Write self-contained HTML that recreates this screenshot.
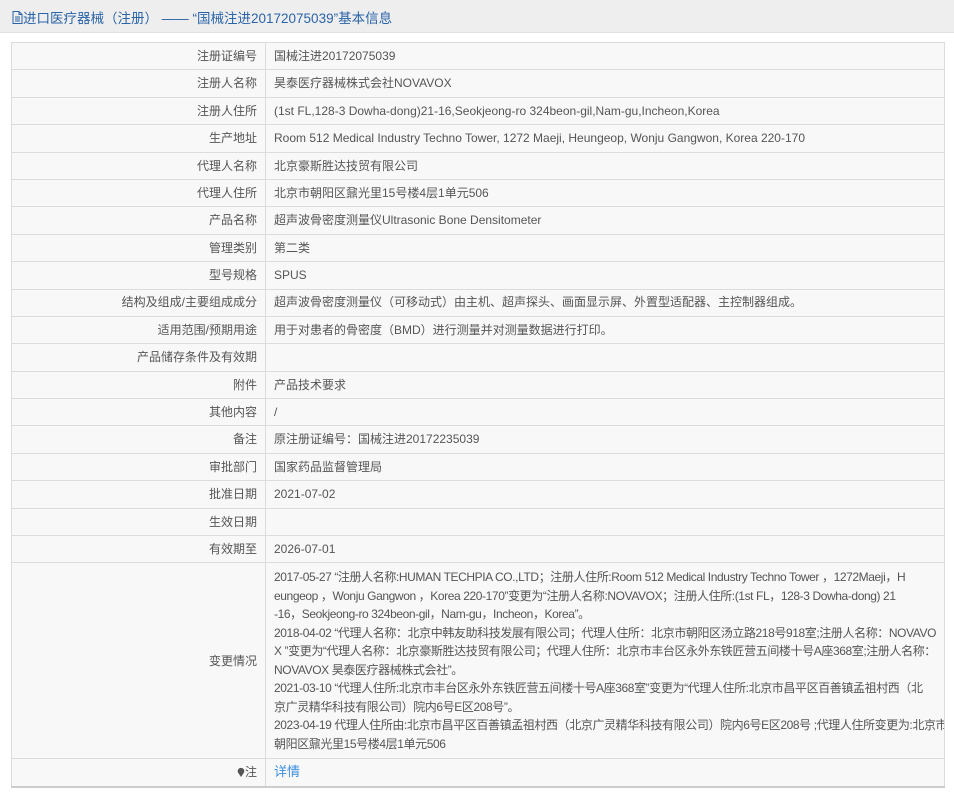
<!DOCTYPE html>
<html><head><meta charset="utf-8">
<style>
html,body{margin:0;padding:0;background:#fff;width:954px;height:794px;overflow:hidden}
body{font-family:"Liberation Sans","Noto Sans CJK SC",sans-serif;font-size:12px;color:#555}
.hd{position:absolute;left:0;top:0;width:954px;height:32px;background:#eeeeee;border-bottom:1px solid #e2e2e2}
.hd span{position:absolute;left:12px;top:7px;font-size:13.5px;color:#2a64a8;white-space:nowrap}
table{position:absolute;left:11px;top:42px;width:934px;border-collapse:collapse;border:1px solid #ccc;border-bottom:2px solid #ccc;table-layout:fixed}
td{border:1px solid #dcdcdc;background:#f8f8f8;height:26.4px;padding:0 8px;white-space:nowrap;line-height:18.5px;overflow:hidden}
td.l{text-align:right}
td.m{padding-top:5px;padding-bottom:5px;letter-spacing:-0.4px}
a{color:#3b8ee0;text-decoration:none;font-size:13px}
</style></head><body>
<div class="hd"><span><svg width="11" height="13" viewBox="0 0 11 13" style="vertical-align:-1px"><path d="M1 .5h6l3 3v9H1z M7 .5v3h3 M3 6h5 M3 8h5 M3 10h5" fill="none" stroke="#2a64a8"/></svg>进口医疗器械（注册） —— “国械注进20172075039”基本信息</span></div>
<table>
<colgroup><col style="width:254px"><col></colgroup>
<tr><td class="l">注册证编号</td><td>国械注进20172075039</td></tr>
<tr><td class="l">注册人名称</td><td>昊泰医疗器械株式会社NOVAVOX</td></tr>
<tr><td class="l">注册人住所</td><td>(1st FL,128-3 Dowha-dong)21-16,Seokjeong-ro 324beon-gil,Nam-gu,Incheon,Korea</td></tr>
<tr><td class="l">生产地址</td><td>Room 512 Medical Industry Techno Tower, 1272 Maeji, Heungeop, Wonju Gangwon, Korea 220-170</td></tr>
<tr><td class="l">代理人名称</td><td>北京豪斯胜达技贸有限公司</td></tr>
<tr><td class="l">代理人住所</td><td>北京市朝阳区鼐光里15号楼4层1单元506</td></tr>
<tr><td class="l">产品名称</td><td>超声波骨密度测量仪Ultrasonic Bone Densitometer</td></tr>
<tr><td class="l">管理类别</td><td>第二类</td></tr>
<tr><td class="l">型号规格</td><td>SPUS</td></tr>
<tr><td class="l">结构及组成/主要组成成分</td><td>超声波骨密度测量仪（可移动式）由主机、超声探头、画面显示屏、外置型适配器、主控制器组成。</td></tr>
<tr><td class="l">适用范围/预期用途</td><td>用于对患者的骨密度（BMD）进行测量并对测量数据进行打印。</td></tr>
<tr><td class="l">产品储存条件及有效期</td><td></td></tr>
<tr><td class="l">附件</td><td>产品技术要求</td></tr>
<tr><td class="l">其他内容</td><td>/</td></tr>
<tr><td class="l">备注</td><td>原注册证编号：国械注进20172235039</td></tr>
<tr><td class="l">审批部门</td><td>国家药品监督管理局</td></tr>
<tr><td class="l">批准日期</td><td>2021-07-02</td></tr>
<tr><td class="l">生效日期</td><td></td></tr>
<tr><td class="l">有效期至</td><td>2026-07-01</td></tr>
<tr><td class="l">变更情况</td><td class="m">2017-05-27 “注册人名称:HUMAN TECHPIA CO.,LTD；注册人住所:Room 512 Medical Industry Techno Tower ，1272Maeji，H<br>eungeop ，Wonju Gangwon ，Korea 220-170”变更为“注册人名称:NOVAVOX；注册人住所:(1st FL，128-3 Dowha-dong) 21<br>-16，Seokjeong-ro 324beon-gil，Nam-gu，Incheon，Korea”。<br>2018-04-02 “代理人名称：北京中韩友助科技发展有限公司；代理人住所：北京市朝阳区汤立路218号918室;注册人名称：NOVAVO<br>X ”变更为“代理人名称：北京豪斯胜达技贸有限公司；代理人住所：北京市丰台区永外东铁匠营五间楼十号A座368室;注册人名称：<br>NOVAVOX 昊泰医疗器械株式会社”。<br>2021-03-10 “代理人住所:北京市丰台区永外东铁匠营五间楼十号A座368室”变更为“代理人住所:北京市昌平区百善镇孟祖村西（北<br>京广灵精华科技有限公司）院内6号E区208号”。<br>2023-04-19 代理人住所由:北京市昌平区百善镇孟祖村西（北京广灵精华科技有限公司）院内6号E区208号 ;代理人住所变更为:北京市<br>朝阳区鼐光里15号楼4层1单元506</td></tr>
<tr><td class="l"><svg width="8" height="10" viewBox="0 0 8 10" style="vertical-align:-1px"><path d="M4 10L1 5.5A3.3 3.3 0 1 1 7 5.5z" fill="#555"/></svg>注</td><td><a>详情</a></td></tr>
</table>
</body></html>
